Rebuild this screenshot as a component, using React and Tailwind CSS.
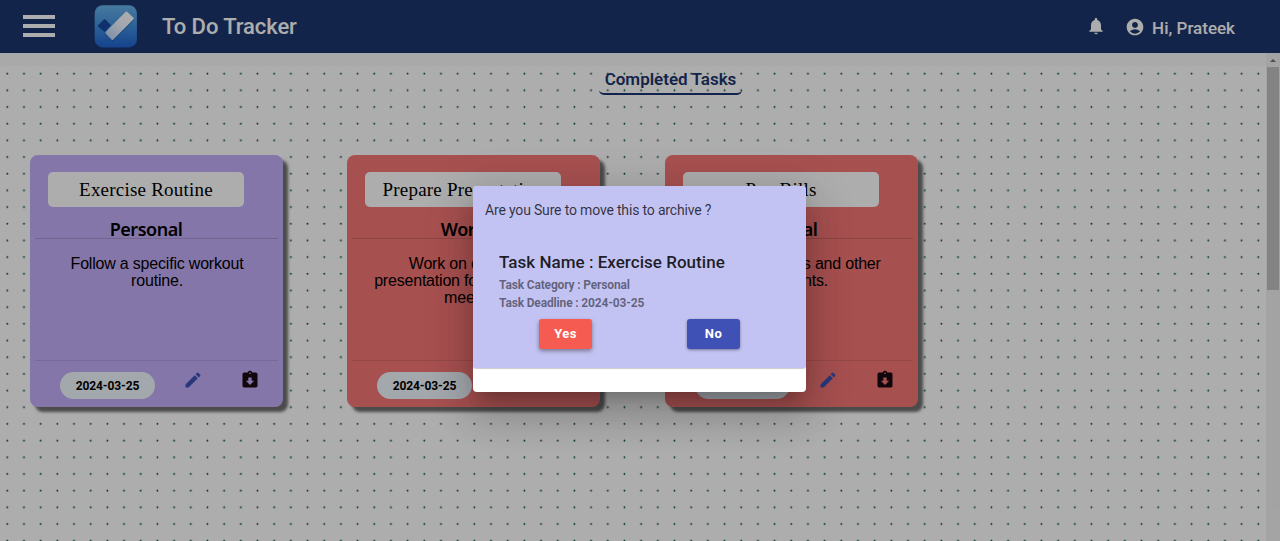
import React from "react";
import { MdNotifications, MdAccountCircle, MdEdit, MdAssignmentReturned } from "react-icons/md";

const tasks = [
  { name: "Exercise Routine", category: "Personal", lines: ["Follow a specific workout", "routine."], date: "2024-03-25", color: "bg-[#c5affb]" },
  { name: "Prepare Presentation", category: "Work", lines: ["Work on creating a", "presentation for the business", "meeting."], date: "2024-03-25", color: "bg-[#f77676]" },
  { name: "Pay Bills", category: "Personal", lines: ["Clear utility bills and other", "payments."], date: "2024-03-25", color: "bg-[#f77676]" },
];

function Logo() {
  return (
    <svg className="ml-[39px] h-[43px] w-[43px] shrink-0" viewBox="0 0 43 43">
      <defs>
        <linearGradient id="tile" x1="0" y1="0" x2="0" y2="1">
          <stop offset="0" stopColor="#6bb4ea" />
          <stop offset="0.5" stopColor="#4190de" />
          <stop offset="1" stopColor="#2063cf" />
        </linearGradient>
        <linearGradient id="mark" x1="1" y1="0" x2="0" y2="1">
          <stop offset="0" stopColor="#ffffff" />
          <stop offset="0.45" stopColor="#f4f7ff" />
          <stop offset="1" stopColor="#b0cdf7" />
        </linearGradient>
      </defs>
      <rect x="0.7" y="0.2" width="42.2" height="42.2" rx="8" fill="url(#tile)" />
      <path d="M4.2 20.2 9.6 14.8Q10.6 13.8 11.6 14.8L17 20.2 10.8 27 4.2 21.8Q3.6 21 4.2 20.2Z" fill="#17479f" />
      <path d="M12 27.3 31.4 7.7Q32.4 6.7 33.4 7.7L39.3 13.2Q40.3 14.2 39.3 15.2L19.4 35.2Q18.4 36.2 17.4 35.2L12 29.6Q10.8 28.5 12 27.3Z" fill="#1b4fa8" opacity="0.45" transform="translate(0 .9)" />
      <path d="M12 26.6 31.4 7Q32.4 6 33.4 7L39.3 12.5Q40.3 13.5 39.3 14.5L19.4 34.5Q18.4 35.5 17.4 34.5L12 28.9Q10.8 27.8 12 26.6Z" fill="url(#mark)" />
    </svg>
  );
}

function TopBar() {
  return (
    <header className="flex h-[53px] shrink-0 items-center bg-[#1d356d] pl-[23px] pr-[45px] text-white">
      <div className="mb-[2px] flex w-8 shrink-0 flex-col gap-[5px]">
        <span className="h-1 bg-white" />
        <span className="h-1 bg-white" />
        <span className="h-1 bg-white" />
      </div>
      <Logo />
      <h1 className="ml-[25px] text-[22px] font-medium leading-8 tracking-[-0.08px]">To Do Tracker</h1>
      <MdNotifications className="mb-[2px] ml-auto h-5 w-5" />
      <MdAccountCircle className="ml-[19px] mt-px h-5 w-5" />
      <span className="ml-[7px] mt-[2px] text-[17px] font-medium leading-6">Hi, Prateek</span>
    </header>
  );
}

function DotGrid() {
  return (
    <svg className="absolute left-0 top-[13px] h-[475px] w-[1267px]">
      <defs>
        <pattern id="dots" width="16.68" height="16.68" patternUnits="userSpaceOnUse">
          <circle cx="7.3" cy="7.6" r="0.93" fill="#004a3a" />
        </pattern>
      </defs>
      <rect width="1267" height="475" fill="url(#dots)" />
    </svg>
  );
}

function TaskCard({ task }) {
  return (
    <article className={"flex h-[252px] w-[253px] shrink-0 flex-col rounded-[8px] px-[5px] pt-[17px] text-black shadow-[5px_5px_3px_#707070] " + task.color}>
      <div className="ml-[13px] flex h-[35px] w-[196px] items-center justify-center whitespace-nowrap rounded-[5px] bg-white pt-px font-['Liberation_Serif',serif] text-[19px] tracking-[0.22px]">
        {task.name}
      </div>
      <h2 className="mt-[9px] h-[22px] w-[222px] text-center font-['Noto_Sans',sans-serif] text-[18px] font-semibold leading-[26px] tracking-[-0.5px]">{task.category}</h2>
      <div className="h-px shrink-0 bg-black/15" />
      <p className="mt-4 h-[105px] shrink-0 whitespace-nowrap pl-px text-center font-['Liberation_Sans',sans-serif] text-[16px] leading-[17px] tracking-[-0.2px]">
        {task.lines.map((line) => (
          <span key={line} className="block">{line}</span>
        ))}
      </p>
      <div className="h-px shrink-0 bg-black/10" />
      <div className="flex pl-[25px]">
        <span className="mt-[11px] flex h-[27px] w-[95px] items-center justify-center rounded-full bg-[#f0f8ff] text-[12px] font-bold tracking-[-0.1px]">{task.date}</span>
        <MdEdit className="ml-[28px] mt-[9px] h-5 w-5 text-[#3f51b5]" />
        <MdAssignmentReturned className="ml-[37px] mt-[9px] h-5 w-5 text-[#1a0a12]" />
      </div>
    </article>
  );
}

function ScrollBar() {
  return (
    <div className="ml-auto flex w-[14px] flex-col items-center bg-[#f1f1f1]">
      <svg className="h-[14px] w-3 shrink-0" viewBox="0 0 12 14"><path d="M3 9 6 6 9 9Z" fill="#737373" /></svg>
      <div className="h-[223px] w-3 shrink-0 bg-[#c1c1c1]" />
    </div>
  );
}

function ArchiveDialog() {
  return (
    <div className="absolute inset-0 flex items-start justify-center bg-black/32">
      <section className="mr-px mt-[186px] h-[206px] w-[333px] overflow-hidden rounded-[4px] bg-white shadow-[0_11px_15px_-7px_rgba(0,0,0,.2),0_24px_38px_3px_rgba(0,0,0,.14),0_9px_46px_8px_rgba(0,0,0,.12)]">
        <div className="h-[182px] rounded-b-[3px] bg-[#c3c3f3] pt-[14px] shadow-[0_1px_1px_rgba(0,0,0,.2)]">
          <p className="pl-[12px] text-[14px] leading-5 tracking-[-0.17px] text-black/75">Are you Sure to move this to archive ?</p>
          <div className="pl-[26px] pt-[30px]">
            <h3 className="text-[17px] font-medium leading-6 tracking-[0.03px] text-black/85">Task Name : Exercise Routine</h3>
            <p className="mt-[2px] text-[12px] font-bold leading-[18px] tracking-[-0.16px] text-black/50">Task Category : Personal</p>
            <p className="text-[12px] font-bold leading-[18px] tracking-[-0.16px] text-black/50">Task Deadline : 2024-03-25</p>
            <div className="mt-[7px] flex gap-[95px] pl-[40px] text-[13px] font-bold tracking-[0.4px] text-white">
              <button className="h-[30px] w-[53px] rounded-[3px] bg-[#f55b50] shadow-[0_2px_4px_rgba(0,0,0,.4)]">Yes</button>
              <button className="h-[30px] w-[53px] rounded-[3px] bg-[#3f51b5] shadow-[0_1px_3px_rgba(0,0,0,.4)]">No</button>
            </div>
          </div>
        </div>
      </section>
    </div>
  );
}

export default function App() {
  return (
    <div className="relative flex h-[541px] w-[1280px] flex-col overflow-hidden bg-white font-['Roboto',sans-serif]">
      <TopBar />
      <main className="relative flex min-h-0 flex-1">
        <DotGrid />
        <div className="relative w-[1266px] shrink-0 bg-linear-to-b from-black/2 from-[13px] to-transparent to-[13px] pt-[14px]">
          <h2 className="ml-[599px] h-[28px] w-[143px] rounded-[5px] border-b-2 border-[#1d356d] text-center text-[17px] font-semibold leading-[25px] text-[#1d356d]">Completed Tasks</h2>
          <div className="mt-[60px] flex gap-16 pl-[30px]">
            {tasks.map((task, i) => (
              <div key={task.name} className={i === 2 ? "pl-px" : ""}>
                <TaskCard task={task} />
              </div>
            ))}
          </div>
        </div>
        <ScrollBar />
      </main>
      <ArchiveDialog />
    </div>
  );
}
